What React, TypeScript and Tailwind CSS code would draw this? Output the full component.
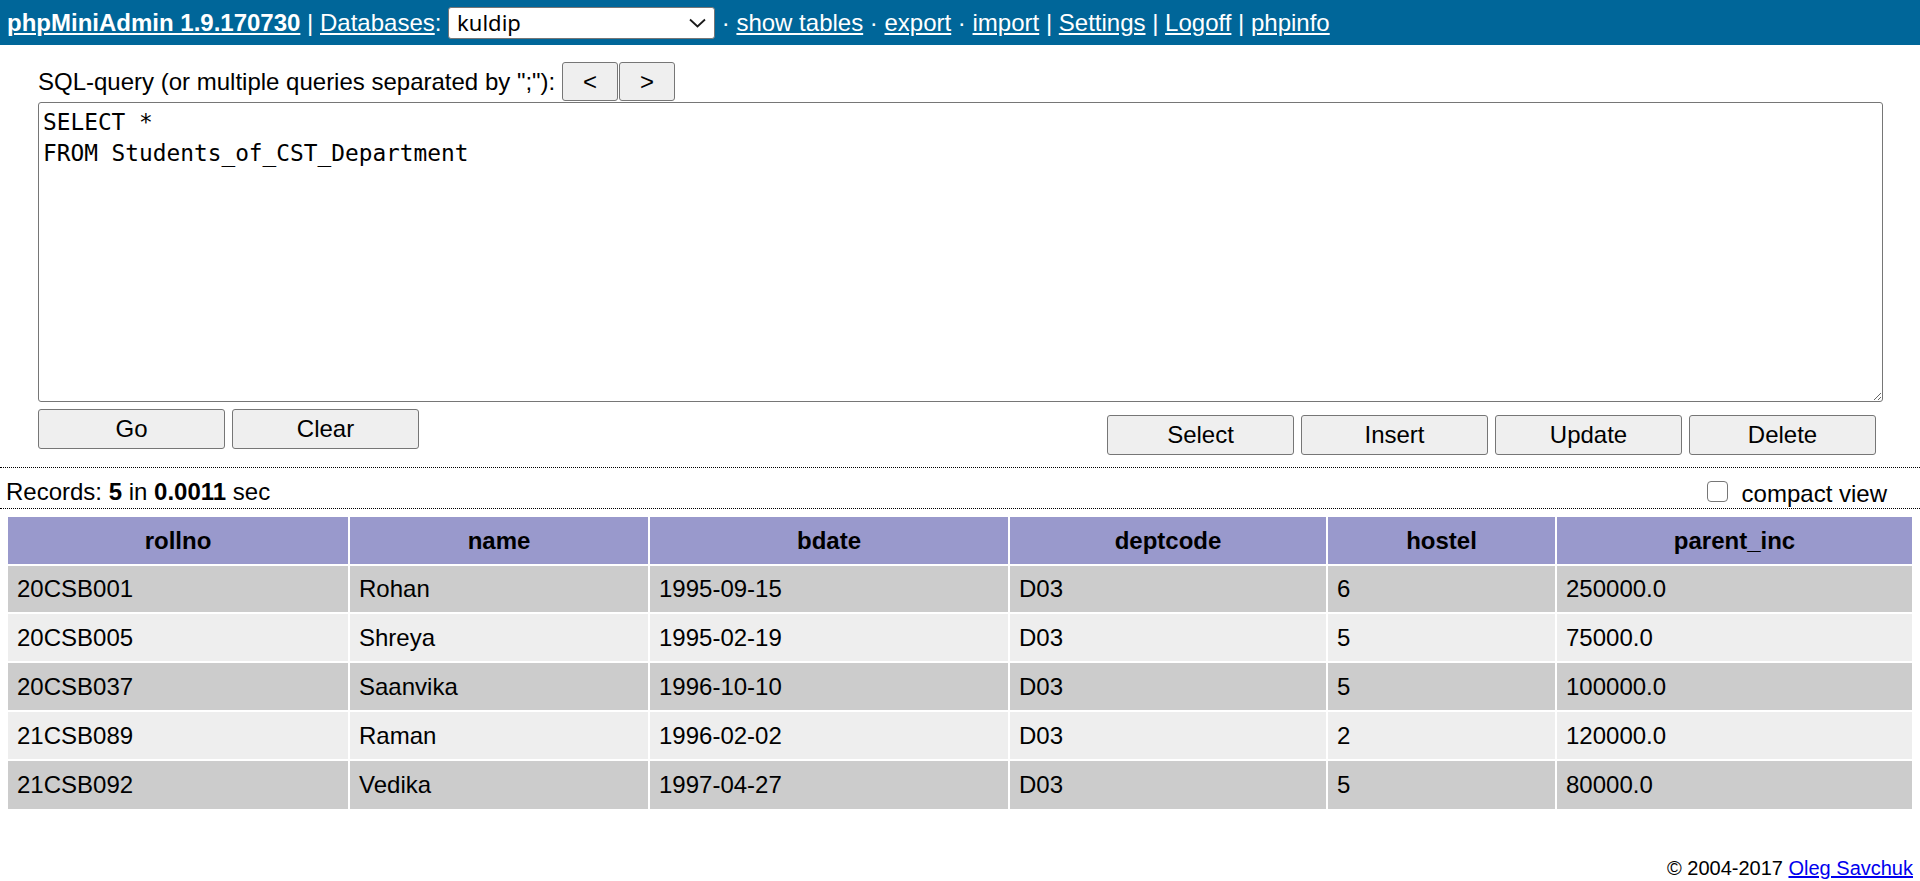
import React from "react";

const columns = ["rollno", "name", "bdate", "deptcode", "hostel", "parent_inc"];
const colWidths = ["w-[342px]", "w-[300px]", "w-[360px]", "w-[318px]", "w-[229px]", "w-[357px]"];
const rowHeights = ["h-[48px]", "h-[49px]", "h-[49px]", "h-[49px]", "h-[50px]"];

const records = [
  ["20CSB001", "Rohan", "1995-09-15", "D03", "6", "250000.0"],
  ["20CSB005", "Shreya", "1995-02-19", "D03", "5", "75000.0"],
  ["20CSB037", "Saanvika", "1996-10-10", "D03", "5", "100000.0"],
  ["21CSB089", "Raman", "1996-02-02", "D03", "2", "120000.0"],
  ["21CSB092", "Vedika", "1997-04-27", "D03", "5", "80000.0"],
];

function Btn({ children, className = "" }: { children: React.ReactNode; className?: string }) {
  return (
    <button
      type="button"
      className={`rounded-[3px] border border-[#767676] bg-[#efefef] text-[24px] leading-none text-black ${className}`}
    >
      {children}
    </button>
  );
}

function Header() {
  return (
    <div className="flex h-[45px] items-center whitespace-pre bg-[#006699] px-[7px] text-[24px] text-white">
      <a href="#" className="font-bold underline">
        phpMiniAdmin 1.9.170730
      </a>
      <span> | </span>
      <a href="#" className="underline">
        Databases
      </a>
      <span>: </span>
      <div className="flex h-[32px] w-[267px] items-center justify-between rounded-[3px] border border-[#767676] bg-white pl-[8px] pr-[8px] font-['Noto_Sans',sans-serif] text-[22px] text-black">
        <span>kuldip</span>
        <svg width="17" height="10" viewBox="0 0 17 10" fill="none">
          <polyline points="1,1.5 8.5,8.5 16,1.5" stroke="#1a1a1a" strokeWidth="1.8" />
        </svg>
      </div>
      <span> · </span>
      <a href="#" className="underline">show tables</a>
      <span> · </span>
      <a href="#" className="underline">export</a>
      <span> · </span>
      <a href="#" className="underline">import</a>
      <span> | </span>
      <a href="#" className="underline">Settings</a>
      <span> | </span>
      <a href="#" className="underline">Logoff</a>
      <span> | </span>
      <a href="#" className="underline">phpinfo</a>
    </div>
  );
}

export default function App() {
  return (
    <div className="min-h-[881px] bg-white font-['Liberation_Sans',Arial,sans-serif] text-[24px] text-black">
      <Header />

      <div className="pl-[38px] pr-[37px] pt-[17px]">
        <div className="flex h-[39px] items-center whitespace-pre">
          <span>SQL-query (or multiple queries separated by ";"): </span>
          <Btn className="h-[39px] w-[56px]">&lt;</Btn>
          <Btn className="ml-[1px] h-[39px] w-[56px]">&gt;</Btn>
        </div>
        <textarea
          readOnly
          defaultValue={"SELECT *\nFROM Students_of_CST_Department"}
          className="mt-[1px] block h-[300px] w-full rounded-[3px] border border-[#767676] px-[4px] pt-[4px] font-['DejaVu_Sans_Mono',monospace] text-[22.8px] leading-[31px] text-black outline-none"
        />
        <div className="mt-[7px] mb-[12px] flex items-start justify-between">
          <div className="flex gap-[7px]">
            <Btn className="h-[40px] w-[187px]">Go</Btn>
            <Btn className="h-[40px] w-[187px]">Clear</Btn>
          </div>
          <div className="mr-[7px] mt-[6px] flex gap-[7px]">
            <Btn className="h-[40px] w-[187px]">Select</Btn>
            <Btn className="h-[40px] w-[187px]">Insert</Btn>
            <Btn className="h-[40px] w-[187px]">Update</Btn>
            <Btn className="h-[40px] w-[187px]">Delete</Btn>
          </div>
        </div>
      </div>

      <div className="flex h-[42px] justify-between border-y border-dotted border-black">
        <div className="pl-[6px] pt-[6px]">
          Records: <b>5</b> in <b>0.0011</b> sec
        </div>
        <div className="flex items-start self-end pr-[33px]">
          <span className="mt-[1px] h-[21px] w-[21px] shrink-0 rounded-[4px] border-[1.5px] border-[#767676] bg-white" />
          <span className="ml-[14px] leading-[28px]">compact view</span>
        </div>
      </div>

      <div className="mt-[7px] px-[7px]">
        <table className="w-full table-fixed border-separate border-spacing-0">
          <colgroup>
            {colWidths.map((w, i) => (
              <col key={i} className={w} />
            ))}
          </colgroup>
          <thead>
            <tr className="h-[49px] bg-[#9999cc]">
              {columns.map((c) => (
                <th key={c} className="border border-white text-center align-middle font-bold">
                  {c}
                </th>
              ))}
            </tr>
          </thead>
          <tbody>
            {records.map((r, i) => (
              <tr key={r[0]} className={`${rowHeights[i]} ${i % 2 === 0 ? "bg-[#cccccc]" : "bg-[#eeeeee]"}`}>
                {r.map((v, j) => (
                  <td key={j} className="border border-white pl-[9px] align-middle">
                    {v}
                  </td>
                ))}
              </tr>
            ))}
          </tbody>
        </table>
      </div>

      <div className="mt-[47px] pr-[7px] text-right text-[20px] leading-[23px]">
        © 2004-2017{" "}
        <a href="#" className="text-[#0000ee] underline">
          Oleg Savchuk
        </a>
      </div>
    </div>
  );
}
